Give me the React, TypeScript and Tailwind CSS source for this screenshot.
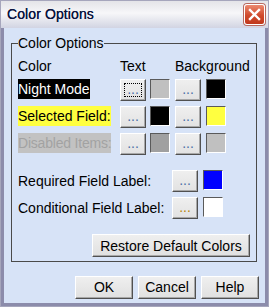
import React from 'react';

const font = { fontFamily: '"Liberation Sans", Arial, sans-serif' };

function DotButton({ focused, tint = 'text-[#4c6fa8]', className = '' }: { focused?: boolean; tint?: string; className?: string }) {
  return (
    <button
      className={`relative h-[22px] w-[26px] flex items-end justify-center bg-[linear-gradient(#efefef,#e2e2e2)] border border-t-white border-l-white border-b-[#505050] border-r-[#505050] shadow-[inset_-1px_-1px_0_#a8a8a8] text-[14px] leading-none ${tint} ${className}`}
    >
      <span className="pb-[4px]">...</span>
      {focused && <span className="absolute inset-[3px] border border-dotted border-black" />}
    </button>
  );
}

function Swatch({ color }: { color: string }) {
  return (
    <div
      className="h-[20px] w-[20px] border border-t-[#5a5a5a] border-l-[#5a5a5a] border-b-white border-r-white"
      style={{ background: color }}
    />
  );
}

function PushButton({ label, className = '' }: { label: string; className?: string }) {
  return (
    <button
      className={`h-[23px] flex items-center justify-center bg-[linear-gradient(#efefef,#e0e0e0)] border border-t-white border-l-white border-b-[#505050] border-r-[#505050] shadow-[inset_-1px_-1px_0_#a8a8a8] text-[14px] text-black ${className}`}
    >
      {label}
    </button>
  );
}

export default function App() {
  const rows = [
    { label: 'Night Mode', cls: 'bg-black text-white', text: '#c0c0c0', bg: '#000000', focused: true },
    { label: 'Selected Field:', cls: 'bg-[#ffff40] text-black', text: '#000000', bg: '#ffff40' },
    { label: 'Disabled Items:', cls: 'bg-[#c2c2c2] text-[#a2a2a2] tracking-[-0.2px]', text: '#a0a0a0', bg: '#c0c0c0' },
  ];

  return (
    <div className="w-[269px] h-[307px] flex flex-col border border-[#a6a6bc] bg-[#e8e8ee]" style={font}>
      <div className="h-[27px] flex items-center justify-between pl-[6px] pr-[3px] bg-[linear-gradient(#e4e4e8,#f7f7f9_45%,#d2d4e2)]">
        <span className="text-[14px] text-[#0c1440] tracking-[0.1px] [text-shadow:0_0_0.4px_#0c1440]">Color Options</span>
        <div className="h-[21px] w-[21px] rounded-[3px] border border-white bg-[linear-gradient(#ec8a70,#d04a2c_55%,#c0381c)] flex items-center justify-center shadow-[0_0_0_1px_#b86a60]">
          <svg width="13" height="13" viewBox="0 0 13 13">
            <path d="M2 2 L11 11 M11 2 L2 11" stroke="white" strokeWidth="2.4" strokeLinecap="square" />
          </svg>
        </div>
      </div>

      <div className="flex-1 flex flex-col border-x-[3px] border-b-[3px] border-[#8c8cab] bg-[#d7e3f7] pl-[7px] pr-[6px] pt-[7px]">
        <fieldset className="mr-[2px] border border-[#4a4a4a] px-[6px] pt-[7px] pb-[4px] text-[14px] leading-[16px] text-black">
          <legend className="px-0 text-[14px] leading-[16px]">Color Options</legend>

          <div className="grid grid-cols-[97px_25px_20px_26px_20px] gap-x-[5px] gap-y-[5px] items-start">
            <div className="mb-[-1px]">Color</div>
            <div>Text</div>
            <div />
            <div className="col-span-2">Background</div>

            {rows.map((r) => (
              <React.Fragment key={r.label}>
                <div className="relative z-[1] h-[22px]">
                  <span className={`inline-flex w-max h-[20px] items-center whitespace-nowrap ${r.cls}`}>{r.label}</span>
                </div>
                <DotButton focused={r.focused} className="w-[25px]" />
                <Swatch color={r.text} />
                <DotButton />
                <Swatch color={r.bg} />
              </React.Fragment>
            ))}
          </div>

          <div className="mt-[15px] flex flex-col gap-[5px]">
            <div className="flex items-center">
              <span className="w-[154px] whitespace-nowrap">Required Field Label:</span>
              <DotButton />
              <div className="ml-[5px] self-start">
                <Swatch color="#0000ff" />
              </div>
            </div>
            <div className="flex items-center">
              <span className="w-[154px] whitespace-nowrap">Conditional Field Label:</span>
              <DotButton tint="text-[#b8860b]" />
              <div className="ml-[5px] self-start">
                <Swatch color="#ffffff" />
              </div>
            </div>
          </div>

          <div className="mt-[15px] flex justify-end">
            <PushButton label="Restore Default Colors" className="w-[158px]" />
          </div>
        </fieldset>

        <div className="mt-[14px] flex justify-end gap-[5px]">
          <PushButton label="OK" className="w-[58px]" />
          <PushButton label="Cancel" className="w-[58px]" />
          <PushButton label="Help" className="w-[58px]" />
        </div>
      </div>
    </div>
  );
}
